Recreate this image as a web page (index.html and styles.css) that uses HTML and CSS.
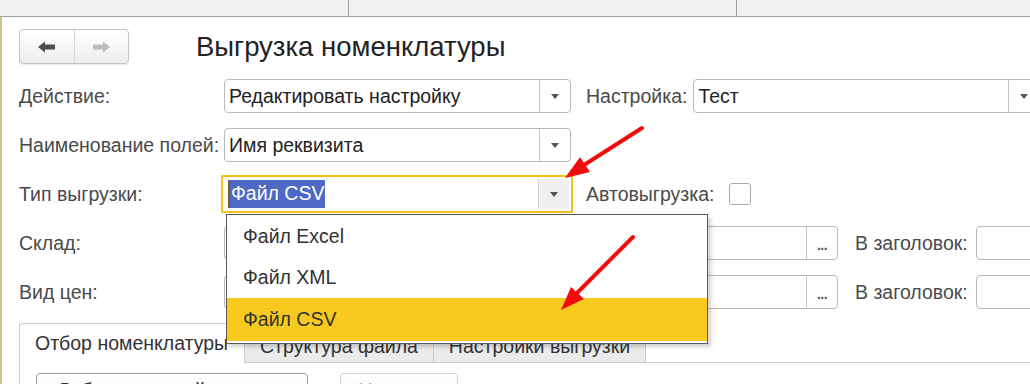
FILE: index.html
```html
<!DOCTYPE html>
<html lang="ru">
<head>
    <meta charset="UTF-8">
    <title>Выгрузка номенклатуры</title>
    <link rel="stylesheet" href="styles.css">
</head>
<body>
    <div class="top-tabs">
        <div class="top-tab t1"></div>
        <div class="top-tab t2"></div>
        <div class="top-tab t3"></div>
    </div>

    <div class="page">
        <div class="header">
            <div class="nav">
                <button class="nav-btn">
                    <svg width="20" height="14" viewBox="0 0 20 14"><path d="M1 7 L8 1.5 L8 4.5 L18 4.5 L18 9.5 L8 9.5 L8 12.5 Z" fill="#4d4d4d"/></svg>
                </button>
                <button class="nav-btn">
                    <svg width="20" height="14" viewBox="0 0 20 14"><path d="M19 7 L12 1.5 L12 4.5 L2 4.5 L2 9.5 L12 9.5 L12 12.5 Z" fill="#bcbcbc"/></svg>
                </button>
            </div>
            <h1>Выгрузка номенклатуры</h1>
        </div>

        <div class="form">
            <div class="row">
                <label class="lbl">Действие:</label>
                <div class="field w-347">
                    <span class="value">Редактировать настройку</span>
                    <span class="drop"><i class="tri"></i></span>
                </div>
                <label class="lbl2">Настройка:</label>
                <div class="field w-347">
                    <span class="value">Тест</span>
                    <span class="drop"><i class="tri"></i></span>
                </div>
            </div>

            <div class="row">
                <label class="lbl">Наименование полей:</label>
                <div class="field w-347">
                    <span class="value">Имя реквизита</span>
                    <span class="drop"><i class="tri"></i></span>
                </div>
            </div>

            <div class="row">
                <label class="lbl">Тип выгрузки:</label>
                <div class="field w-347 focus">
                    <span class="value"><span class="sel">Файл CSV</span></span>
                    <span class="drop"><i class="tri"></i></span>
                    <ul class="popup">
                        <li>Файл Excel</li>
                        <li>Файл XML</li>
                        <li class="current">Файл CSV</li>
                    </ul>
                </div>
                <label class="lbl2">Автовыгрузка:</label>
                <span class="check"></span>
            </div>

            <div class="row">
                <label class="lbl">Склад:</label>
                <div class="field w-614">
                    <span class="value"></span>
                    <span class="dots">...</span>
                </div>
                <label class="lbl3">В заголовок:</label>
                <div class="field w-120"></div>
            </div>

            <div class="row">
                <label class="lbl">Вид цен:</label>
                <div class="field w-614">
                    <span class="value"></span>
                    <span class="dots">...</span>
                </div>
                <label class="lbl3">В заголовок:</label>
                <div class="field w-120"></div>
            </div>
        </div>

        <div class="panel">
            <div class="tabs">
                <div class="tab active">Отбор номенклатуры</div>
                <div class="tab t-struct">Структура файла</div>
                <div class="tab t-sett">Настройки выгрузки</div>
                <div class="tab-rest"></div>
            </div>
            <div class="panel-body">
                <button class="btn main">Добавить новый</button>
                <button class="btn light">Удалить</button>
            </div>
        </div>
    </div>

    <svg class="marks" width="1030" height="384" viewBox="0 0 1030 384">
        <line x1="642" y1="128" x2="584" y2="165" stroke="#f20d0d" stroke-width="4" stroke-linecap="round"/>
        <polygon points="565,178 590,172 580,157" fill="#f20d0d"/>
        <line x1="633" y1="237" x2="577" y2="293" stroke="#f20d0d" stroke-width="4" stroke-linecap="round"/>
        <polygon points="561,310 584,299 571,287" fill="#f20d0d"/>
    </svg>
</body>
</html>
```

FILE: styles.css
```css
body {
    margin: 0;
    width: 1030px;
    height: 384px;
    overflow: hidden;
    position: relative;
    background: #fff;
    font-family: "Liberation Sans", Arial, sans-serif;
    color: #333;
}

.top-tabs {
    display: flex;
    height: 16px;
    background: #f1f1f1;
    border-bottom: 1px solid #a3a3a3;
}

.top-tab {
    border-right: 1px solid #a3a3a3;
}

.t1 { width: 348px; }
.t2 { width: 387px; }
.t3 { flex: 1; border-right: none; }

.page {
    border-left: 2px solid #cfc28c;
    padding-left: 17px;
    height: 367px;
    overflow: hidden;
}

.header {
    display: flex;
    align-items: center;
    padding-top: 12px;
    height: 35px;
}

.nav {
    display: flex;
    width: 110px;
    height: 35px;
    box-sizing: border-box;
    border: 1px solid #c2c2c2;
    border-radius: 4px;
    background: linear-gradient(#ffffff, #ededed);
    box-shadow: 0 1px 1px rgba(0, 0, 0, 0.08);
    flex-shrink: 0;
}

.nav-btn {
    flex: 1;
    border: none;
    background: transparent;
    display: flex;
    align-items: center;
    justify-content: center;
    padding: 0;
}

.nav-btn:first-child {
    border-right: 1px solid #d6d6d6;
}

h1 {
    margin: 0 0 0 67px;
    font-size: 27.5px;
    font-weight: normal;
    color: #222;
    white-space: nowrap;
}

.form {
    display: flex;
    flex-direction: column;
    gap: 15px;
    margin-top: 15px;
}

.row {
    display: flex;
    align-items: center;
    height: 34px;
}

.lbl,
.lbl2,
.lbl3 {
    flex-shrink: 0;
    font-size: 19.5px;
    color: #4a4a4a;
    white-space: nowrap;
}

.lbl {
    width: 205px;
}

.lbl2 {
    margin-left: 15px;
    margin-right: 6px;
}

.lbl3 {
    margin-left: 17px;
    margin-right: 8px;
}

.field {
    position: relative;
    display: flex;
    height: 34px;
    box-sizing: border-box;
    border: 1px solid #b9b9b9;
    border-radius: 4px;
    background: #fff;
    flex-shrink: 0;
}

.w-347 { width: 347px; }
.w-614 { width: 614px; }
.w-120 { width: 120px; }

.value {
    flex: 1;
    display: flex;
    align-items: center;
    padding-left: 4px;
    font-size: 19.5px;
    color: #222;
    white-space: nowrap;
}

.drop {
    width: 30px;
    border-left: 1px solid #c4c4c4;
    display: flex;
    align-items: center;
    justify-content: center;
}

.tri {
    width: 0;
    height: 0;
    border-left: 4px solid transparent;
    border-right: 4px solid transparent;
    border-top: 5px solid #555;
}

.dots {
    width: 30px;
    border-left: 1px solid #c4c4c4;
    display: flex;
    align-items: center;
    justify-content: center;
    padding-top: 3px;
    font-size: 14px;
    font-weight: bold;
    color: #555;
    letter-spacing: -0.5px;
}

.field.focus {
    border: 2px solid #f3c21a;
    border-radius: 1px;
    width: 352px;
    height: 38px;
    margin-left: -3px;
    margin-right: -2px;
}

.field.focus .value {
    padding-left: 5px;
}

.field.focus .drop {
    background: #efefef;
    border-left: 1px solid #d4d4d4;
    margin: 2px 2px 2px 0;
}

.sel {
    background: #4e69c5;
    color: #fff;
    padding: 2px 1px 3px 1px;
    border-left: 2px solid #7a5f2c;
}

.check {
    width: 20px;
    height: 20px;
    border: 1px solid #a9a9a9;
    border-radius: 3px;
    margin-left: 8px;
    flex-shrink: 0;
}

.popup {
    position: absolute;
    top: 37px;
    left: 3px;
    width: 482px;
    height: 130px;
    box-sizing: border-box;
    margin: 0;
    padding: 1px 0;
    list-style: none;
    background: #fff;
    border: 1px solid #5a5a5a;
    box-shadow: 3px 3px 4px rgba(0, 0, 0, 0.18);
    z-index: 5;
}

.popup li {
    height: 41px;
    display: flex;
    align-items: center;
    padding-left: 16px;
    font-size: 19.5px;
    color: #333;
}

.popup li.current {
    background: #f8ca20;
    height: 43px;
}

.panel {
    margin-top: 14px;
    border-left: 1px solid #cdcdcd;
}

.tabs {
    display: flex;
    align-items: flex-end;
    height: 40px;
}

.tab {
    height: 34px;
    box-sizing: border-box;
    display: flex;
    align-items: center;
    justify-content: center;
    font-size: 19.5px;
    color: #333;
    background: #ebebeb;
    border: 1px solid #cdcdcd;
    border-left: none;
    white-space: nowrap;
    flex-shrink: 0;
}

.tab.active {
    width: 225px;
    height: 40px;
    background: #fff;
    border-bottom: none;
    border-top-left-radius: 4px;
    justify-content: flex-start;
    padding-left: 15px;
}

.t-struct { width: 189px; }
.t-sett { width: 212px; }

.tab-rest {
    flex: 1;
    border-bottom: 1px solid #cdcdcd;
}

.panel-body {
    display: flex;
    gap: 32px;
    padding: 10px 0 0 16px;
}

.btn {
    height: 34px;
    border-radius: 4px;
    font-family: "Liberation Sans", Arial, sans-serif;
    font-size: 19.5px;
    color: #333;
    text-align: left;
    padding: 0 0 0 20px;
    background: linear-gradient(#ffffff, #f1f1f1);
}

.btn.main {
    width: 272px;
    border: 1px solid #9d9d9d;
}

.btn.light {
    width: 118px;
    border: 1px solid #d2d2d2;
    color: #aaa;
    padding-left: 18px;
}

.marks {
    position: absolute;
    top: 0;
    left: 0;
    pointer-events: none;
    z-index: 10;
}
```
